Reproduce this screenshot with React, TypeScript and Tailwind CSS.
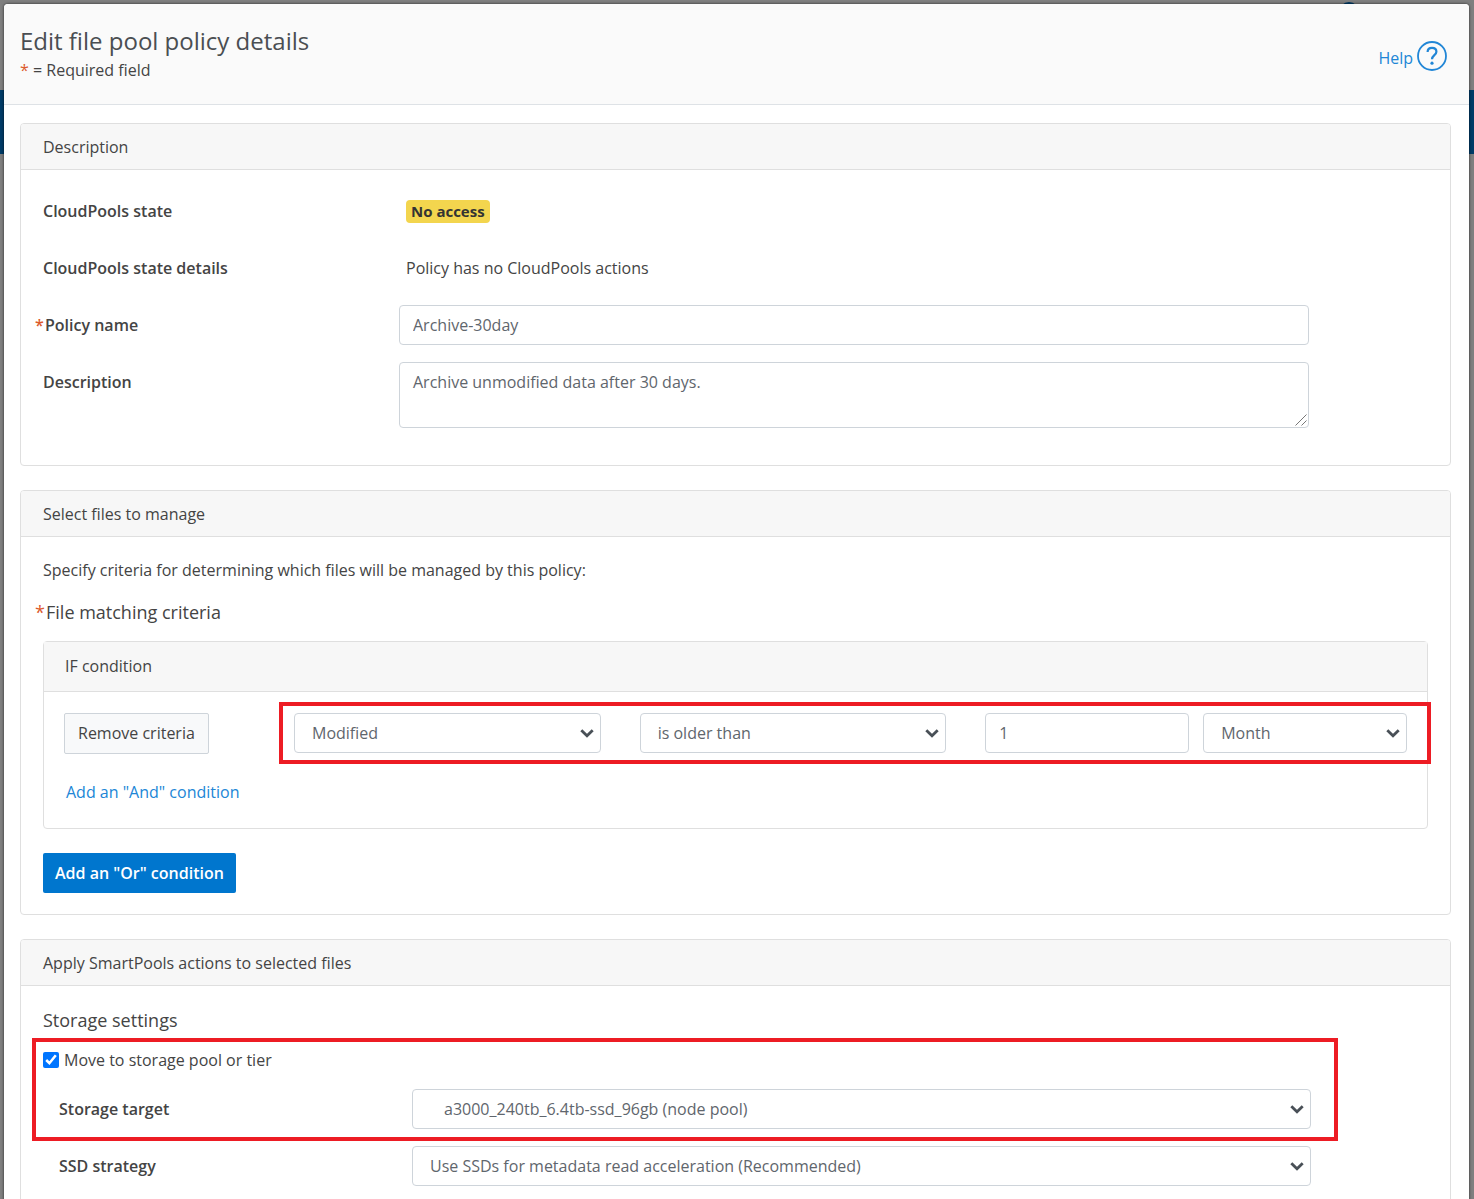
import { useState } from "react";
import type { ReactNode } from "react";

const fieldClass =
  "w-full rounded-[4px] border border-[#ced4da] bg-white text-[#5f666d] outline-none focus:border-[#0076ce]";

export default function App() {
  const [name, setName] = useState("Archive-30day");
  const [description, setDescription] = useState(
    "Archive unmodified data after 30 days."
  );
  const [amount, setAmount] = useState("1");
  const [moveToPool, setMoveToPool] = useState(true);

  return (
    <div className="relative h-screen overflow-hidden bg-[#7f7f7f] px-1 pt-1 font-['Open_Sans','Noto_Sans',sans-serif] text-base leading-[23px] text-[#444]">
      {/* dimmed page behind the dialog */}
      <div className="absolute inset-x-0 top-[90px] h-16 bg-[#003b67]" />
      <div className="absolute top-[2px] right-[115px] size-5 rounded-full bg-[#003b67]" />

      <div
        role="dialog"
        aria-labelledby="dialog-title"
        className="relative mr-px min-h-screen rounded-[4px] bg-white shadow-[0_0_3px_rgba(0,0,0,0.7)]"
      >
        <header className="flex items-start justify-between rounded-t-[4px] border-b border-[#dee2e6] bg-[#fafafa] pt-5 pr-[22px] pb-[22px] pl-4">
          <div>
            <h1
              id="dialog-title"
              className="text-2xl leading-[34px] text-[#4a4e52]"
            >
              Edit file pool policy details
            </h1>
            <p className="leading-6">
              <span className="text-[#dc5a2c]">*</span> = Required field
            </p>
          </div>
          <a
            href="#help"
            className="mt-[17px] flex items-end gap-1 text-[#2186d6]"
          >
            <span className="leading-[26px]">Help</span>
            <HelpIcon />
          </a>
        </header>

        <main className="flex flex-col gap-6 pt-[18px] pr-[18px] pl-4">
          <Card title="Description">
            <div className="flex flex-col gap-[17px] pt-[21px] pr-[141px] pb-[37px] pl-[22px]">
              <Row label="CloudPools state">
                <span className="ml-[7px] rounded-[4px] bg-[#f3d54e] px-[5px] text-[15px] font-bold text-[#333]">
                  No access
                </span>
              </Row>
              <Row label="CloudPools state details">
                <span className="ml-[7px]">
                  Policy has no CloudPools actions
                </span>
              </Row>
              <Row label="Policy name" htmlFor="policy-name" required>
                <input
                  id="policy-name"
                  type="text"
                  value={name}
                  onChange={(e) => setName(e.target.value)}
                  className={`${fieldClass} h-10 px-[13px]`}
                />
              </Row>
              <Row label="Description" htmlFor="policy-description">
                <div className="relative w-full">
                  <textarea
                    id="policy-description"
                    value={description}
                    onChange={(e) => setDescription(e.target.value)}
                    className={`${fieldClass} block h-[66px] resize-none px-[13px] py-2`}
                  />
                  <svg
                    viewBox="0 0 12 12"
                    className="pointer-events-none absolute right-[2px] bottom-[2px] size-3"
                    stroke="#777"
                  >
                    <path d="M.5 11.5l11-11M6.5 11.5l5-5" />
                  </svg>
                </div>
              </Row>
            </div>
          </Card>

          <Card title="Select files to manage">
            <div className="px-[22px] pt-[22px] pb-[21px]">
              <p>
                Specify criteria for determining which files will be managed by
                this policy:
              </p>
              <h3 className="relative mt-[18px] pl-[3px] text-lg leading-6">
                <Required />
                File matching criteria
              </h3>

              <div className="mt-[17px] rounded-[4px] border border-[#dfdfdf]">
                <h4 className="border-b border-[#dfdfdf] bg-[#f7f7f7] px-[21px] py-[13px]">
                  IF condition
                </h4>
                <div className="px-5 pt-[21px] pb-6">
                  <div className="flex">
                    <div className="w-[230px] shrink-0">
                      <button
                        type="button"
                        className="h-[41px] rounded-[2px] border border-[#ced4da] bg-[#f8f9fa] px-[13px]"
                      >
                        Remove criteria
                      </button>
                    </div>
                    <div className="relative grid flex-1 grid-cols-[8fr_8fr_11fr] gap-[39px]">
                      <Select
                        label="File attribute"
                        options={["Modified", "Accessed", "Created"]}
                      />
                      <Select
                        label="Comparison"
                        options={["is older than", "is newer than"]}
                      />
                      <div className="grid grid-cols-2 gap-[14px]">
                        <input
                          type="text"
                          aria-label="Amount"
                          value={amount}
                          onChange={(e) => setAmount(e.target.value)}
                          className={`${fieldClass} h-10 px-[13px]`}
                        />
                        <Select
                          label="Unit"
                          options={["Month", "Day", "Week", "Year"]}
                        />
                      </div>
                      <div className="pointer-events-none absolute -top-[11px] -right-6 -bottom-[10px] -left-[15px] border-4 border-[#ed1c24]" />
                    </div>
                  </div>
                  <button
                    type="button"
                    className="mt-[27px] ml-[2px] block text-[#2186d6]"
                  >
                    Add an "And" condition
                  </button>
                </div>
              </div>

              <button
                type="button"
                className="mt-6 block h-10 rounded-[2px] bg-[#0076ce] px-3 font-semibold text-white"
              >
                Add an "Or" condition
              </button>
            </div>
          </Card>

          <Card title="Apply SmartPools actions to selected files">
            <div className="pt-[22px] pr-[139px] pb-10 pl-[22px]">
              <h3 className="text-lg leading-6">Storage settings</h3>
              <div className="relative mt-4">
                <label className="flex w-fit items-center gap-[5px] leading-6">
                  <input
                    type="checkbox"
                    checked={moveToPool}
                    onChange={(e) => setMoveToPool(e.target.checked)}
                    className="size-4 accent-[#0075ff]"
                  />
                  Move to storage pool or tier
                </label>
                <StorageRow label="Storage target" id="storage-target">
                  <Select
                    id="storage-target"
                    indent
                    options={["a3000_240tb_6.4tb-ssd_96gb (node pool)"]}
                  />
                </StorageRow>
                <div className="pointer-events-none absolute -top-[10px] -right-[27px] -bottom-3 -left-[11px] border-4 border-[#ed1c24]" />
              </div>
              <StorageRow label="SSD strategy" id="ssd-strategy">
                <Select
                  id="ssd-strategy"
                  options={[
                    "Use SSDs for metadata read acceleration (Recommended)",
                    "Use SSDs for metadata read/write acceleration",
                    "Use SSDs for data & metadata",
                    "Avoid SSDs",
                  ]}
                />
              </StorageRow>
            </div>
          </Card>
        </main>
      </div>
    </div>
  );
}

function Card({ title, children }: { title: string; children: ReactNode }) {
  return (
    <section className="rounded-[4px] border border-[#dfdfdf] bg-white">
      <h2 className="rounded-t-[3px] border-b border-[#dfdfdf] bg-[#f7f7f7] px-[22px] pt-3 pb-[10px]">
        {title}
      </h2>
      {children}
    </section>
  );
}

function Required() {
  return <span className="absolute -left-2 text-[#dc5a2c]">*</span>;
}

function Row({
  label,
  htmlFor,
  required,
  children,
}: {
  label: string;
  htmlFor?: string;
  required?: boolean;
  children: ReactNode;
}) {
  return (
    <div className="flex items-start">
      <div className="relative w-[356px] shrink-0 leading-10 font-semibold">
        {htmlFor ? (
          <label htmlFor={htmlFor} className={required ? "pl-[2px]" : ""}>
            {required && <Required />}
            {label}
          </label>
        ) : (
          <span>{label}</span>
        )}
      </div>
      <div className="flex min-h-10 flex-1 items-center">{children}</div>
    </div>
  );
}

function StorageRow({
  label,
  id,
  children,
}: {
  label: string;
  id: string;
  children: ReactNode;
}) {
  return (
    <div className="mt-[17px] flex items-center pl-4">
      <label htmlFor={id} className="w-[353px] shrink-0 font-semibold">
        {label}
      </label>
      <div className="flex-1">{children}</div>
    </div>
  );
}

function Select({
  id,
  label,
  options,
  indent,
}: {
  id?: string;
  label?: string;
  options: string[];
  indent?: boolean;
}) {
  return (
    <div className="relative">
      <select
        id={id}
        aria-label={label}
        className={`${fieldClass} block h-10 appearance-none pr-8 ${
          indent ? "pl-[31px]" : "pl-[17px]"
        }`}
      >
        {options.map((option) => (
          <option key={option}>{option}</option>
        ))}
      </select>
      <svg
        viewBox="0 0 14 10"
        className="pointer-events-none absolute top-[15px] right-[7px] h-[10px] w-[14px]"
        fill="none"
        stroke="#495057"
        strokeWidth="2.8"
      >
        <path d="M1.3 2.3 7 7.8l5.7-5.5" />
      </svg>
    </div>
  );
}

function HelpIcon() {
  return (
    <svg
      viewBox="0 0 30 30"
      className="size-[30px]"
      fill="none"
      stroke="#2186d6"
      strokeWidth="1.8"
    >
      <circle cx="15" cy="15" r="14" />
      <path
        d="M10.6 11c0-2.6 1.9-4.1 4.4-4.1s4.4 1.5 4.4 3.8c0 3.4-4.4 3.5-4.4 7.5"
        strokeWidth="2.2"
      />
      <circle cx="15" cy="22.2" r="1.6" fill="#2186d6" stroke="none" />
    </svg>
  );
}
